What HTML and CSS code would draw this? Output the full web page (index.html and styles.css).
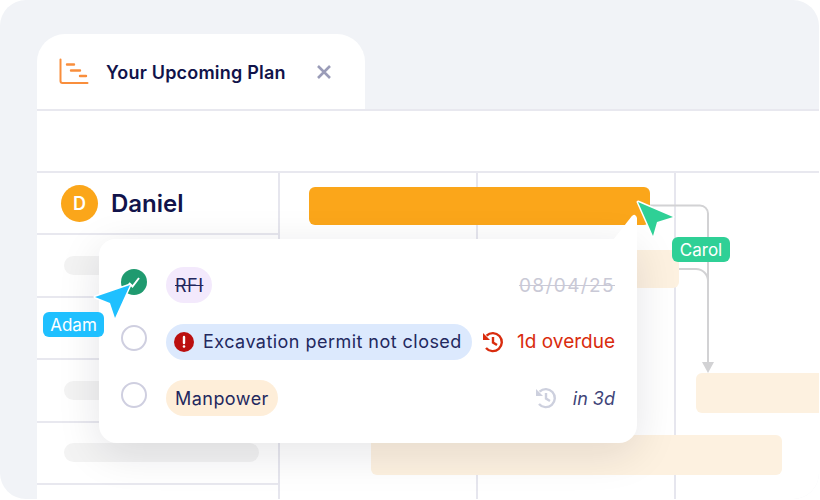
FILE: index.html
```html
<!DOCTYPE html>
<html lang="en">
<head>
    <meta charset="UTF-8">
    <title>Your Upcoming Plan</title>
    <link rel="stylesheet" href="styles.css">
</head>
<body>
    <div class="frame">
        <div class="tab">
            <svg class="tab-icon" width="30" height="28" viewBox="0 0 30 28" fill="none" stroke="#f98e3c" stroke-linecap="round" stroke-linejoin="round">
                <path d="M1.5 1.5V23a2 2 0 0 0 2 2H28.5" stroke-width="2"/>
                <path d="M8 6.5h7M12 12.5h9M21 18h6" stroke-width="2.4"/>
            </svg>
            <span class="tab-title">Your Upcoming Plan</span>
            <svg class="tab-close" width="14" height="14" viewBox="0 0 14 14" fill="none" stroke="#9a9cb8" stroke-width="2.6">
                <path d="M1 1l12 12M13 1L1 13"/>
            </svg>
        </div>

        <div class="window">
            <div class="band"></div>
            <div class="grid">
                <div class="side">
                    <div class="side-row">
                        <span class="avatar">D</span>
                        <span class="name">Daniel</span>
                    </div>
                    <div class="side-row"><span class="pill"></span></div>
                    <div class="side-row"><span class="pill"></span></div>
                    <div class="side-row"><span class="pill"></span></div>
                    <div class="side-row"><span class="pill"></span></div>
                    <div class="side-row"></div>
                </div>
                <div class="chart">
                    <div class="col"></div>
                    <div class="col"></div>
                    <div class="col"></div>
                    <div class="bar bar-main"></div>
                    <div class="bar bar-two"></div>
                    <div class="bar bar-three"></div>
                    <div class="bar bar-four"></div>
                </div>
            </div>
        </div>

        <svg class="links" width="819" height="499" viewBox="0 0 819 499" fill="none" stroke="#d2d2d4" stroke-width="2">
            <path d="M650 205.500H700a8 8 0 0 1 8 8V366"/>
            <path d="M679 269H696a12 12 0 0 1 12 12"/>
            <path d="M702 362h12l-6 11z" fill="#d2d2d4" stroke="none"/>
        </svg>

        <div class="popup">
            <svg class="popup-tip" width="24" height="26" viewBox="0 0 24 26"><path d="M0 26L18.500 2.500q2-2.500 3.500-1.500t2 3V26z" fill="#fff"/></svg>
            <div class="task">
                <span class="check done">
                    <svg width="26" height="26" viewBox="0 0 26 26" fill="none" stroke="#fff" stroke-width="2"><path d="M8 14l3.500 3.500L18 9"/></svg>
                </span>
                <span class="chip chip-purple"><s>RFI</s></span>
                <span class="due due-done">08/04/25</span>
            </div>
            <div class="task">
                <span class="check"></span>
                <span class="chip chip-blue">
                    <svg width="20" height="20" viewBox="0 0 20 20"><circle cx="10" cy="10" r="10" fill="#bb0f0f"/><path d="M10 5v6" stroke="#fff" stroke-width="2.400" stroke-linecap="round"/><circle cx="10" cy="14.500" r="1.300" fill="#fff"/></svg>
                    Excavation permit not closed
                </span>
                <span class="due due-late">
                    <svg width="24" height="24" viewBox="0 0 24 24" fill="none" stroke="currentColor" stroke-width="2.400"><path d="M5.600 5.600A9 9 0 1 1 5 18"/><path d="M2 3v7h7z" fill="currentColor" stroke="none"/><path d="M12 7v5.500l4 2.500"/></svg>
                    1d overdue
                </span>
            </div>
            <div class="task">
                <span class="check"></span>
                <span class="chip chip-orange">Manpower</span>
                <span class="due due-soon">
                    <svg width="24" height="24" viewBox="0 0 24 24" fill="none" stroke="#cdd0de" stroke-width="2.400"><path d="M5.600 5.600A9 9 0 1 1 5 18"/><path d="M2 3v7h7z" fill="#cdd0de" stroke="none"/><path d="M12 7v5.500l4 2.500"/></svg>
                    <em>in 3d</em>
                </span>
            </div>
        </div>

        <svg class="cursor cursor-adam" width="44" height="42" viewBox="0 0 44 42">
            <path class="cursor-shape" d="M37 3L2 15 17 21 22 36z" fill="#1fc0ff"/>
        </svg>
        <span class="tag tag-adam">Adam</span>

        <svg class="cursor cursor-carol" width="44" height="42" viewBox="0 0 44 42">
            <path class="cursor-shape" d="M3 2L38 17 22 22 18 36z" fill="#2fd096"/>
        </svg>
        <span class="tag tag-carol">Carol</span>
    </div>
</body>
</html>
```

FILE: styles.css
```css
body { margin: 0; background: #fff; font-family: Inter, "Liberation Sans", sans-serif; color: #23285e; }
.frame { position: relative; width: 819px; height: 499px; padding: 34px 0 0 37px; box-sizing: border-box; background: #f1f3f7; border-radius: 26px; overflow: hidden; display: flex; flex-direction: column; }

.tab { width: 328px; height: 75px; flex: none; background: #fff; border-radius: 28px 28px 0 0; display: flex; align-items: center; box-sizing: border-box; padding: 1px 0 0 22px; }
.tab-icon { margin-right: 17px; }
.tab-title { font-size: 18px; font-weight: 600; color: #11134a; letter-spacing: 0.2px; }
.tab-close { margin-left: 31px; }

.window { flex: 1; background: #fff; border-top: 2px solid #e8e8ef; display: flex; flex-direction: column; min-height: 0; }
.band { height: 60px; flex: none; border-bottom: 2px solid #e8e8ef; }
.grid { flex: 1; display: flex; min-height: 0; }

.side { width: 241px; flex: none; border-right: 2px solid #e6e6ee; }
.side-row { height: 60.400px; border-bottom: 2px solid #e8e8ef; display: flex; align-items: center; padding-left: 27px; }
.avatar { width: 37px; height: 37px; margin-left: -3px; border-radius: 50%; background: #fba61a; color: #fff; font-size: 18px; font-weight: 600; display: flex; align-items: center; justify-content: center; }
.name { margin-left: 13px; font-size: 24px; font-weight: 600; color: #11134a; }
.pill { width: 195px; height: 19px; border-radius: 10px; background: #f3f3f3; }

.chart { position: relative; flex: 1; display: flex; }
.col { width: 196px; flex: none; border-right: 2px solid #e6e6ee; }
.bar { position: absolute; border-radius: 6px; background: #fdf1e0; }
.bar-main { left: 29px; top: 14px; width: 341px; height: 38px; background: #fba61a; }
.bar-two { left: 300px; top: 77px; width: 99px; height: 38px; }
.bar-three { left: 416px; top: 200px; width: 140px; height: 40px; }
.bar-four { left: 91px; top: 262px; width: 411px; height: 40px; }

.links { position: absolute; left: 0; top: 0; }

.popup { position: absolute; left: 99px; top: 239px; width: 538px; height: 204px; box-sizing: border-box; padding: 28px 22px 0 22px; background: #fff; border-radius: 0 0 18px 18px; border-top-left-radius: 16px; box-shadow: 0 10px 44px rgba(20, 20, 40, 0.11); display: flex; flex-direction: column; gap: 20.500px; }
.popup-tip { position: absolute; right: 0; top: -25px; }
.task { display: flex; align-items: center; height: 36px; }
.check { width: 26px; height: 26px; flex: none; box-sizing: border-box; margin: 0 19px 7px 0; border: 2px solid #cfcfe0; border-radius: 50%; }
.check.done { background: #1f9a6f; border: none; }
.check svg { display: block; }
.chip { height: 36px; display: flex; align-items: center; gap: 9px; padding: 0 9px; border-radius: 18px; font-size: 18px; white-space: nowrap; letter-spacing: 0.46px; }
.chip-purple { background: #f3e9fc; }
.chip-blue { background: #dce9fd; padding: 0 10px 0 8px; }
.chip-orange { background: #feeed9; }
.due { margin-left: auto; display: flex; align-items: center; gap: 12px; font-size: 19px; white-space: nowrap; }
.due-done { color: #c9c9d6; text-decoration: line-through; letter-spacing: 1.400px; }
.due-late { color: #d92c0e; }
.due-soon { color: #3e4478; font-size: 18px; gap: 15px; }

.cursor { position: absolute; }
.cursor-adam { left: 93px; top: 282px; }
.cursor-carol { left: 635px; top: 200px; }
.cursor-shape { stroke: #fff; stroke-width: 3; stroke-linejoin: round; paint-order: stroke; }
.tag { position: absolute; height: 25px; display: flex; align-items: center; justify-content: center; border-radius: 6px; color: #fff; font-size: 17px; }
.tag-adam { left: 43px; top: 312px; width: 61px; background: #1fc0ff; }
.tag-carol { left: 672px; top: 237px; width: 58px; background: #2fd096; }
```
